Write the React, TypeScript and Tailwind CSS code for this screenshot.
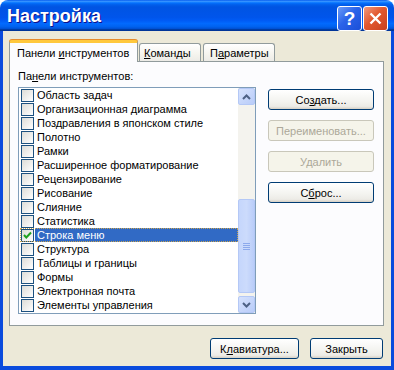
import React from 'react';

const items = [
  'Область задач',
  'Организационная диаграмма',
  'Поздравления в японском стиле',
  'Полотно',
  'Рамки',
  'Расширенное форматирование',
  'Рецензирование',
  'Рисование',
  'Слияние',
  'Статистика',
  'Строка меню',
  'Структура',
  'Таблицы и границы',
  'Формы',
  'Электронная почта',
  'Элементы управления',
];

const selected = 10;

const btn =
  'h-[21px] rounded-[3px] border border-[#003C74] bg-[linear-gradient(to_bottom,#FFFFFF,#F3F3EF_60%,#ECEBE6_86%,#D6D0C5)] text-[11px] leading-[14px] text-black flex items-center justify-center';
const btnOff =
  'h-[21px] rounded-[3px] border border-[#C9C7BA] bg-[#F5F4EA] text-[11px] leading-[14px] text-[#ACA899] flex items-center justify-center';

const Checkbox = ({ checked }: { checked?: boolean }) => (
  <div className="w-[13px] h-[13px] shrink-0 border border-[#1C5180] bg-[linear-gradient(135deg,#DCDCD7,#FFFFFF)] flex items-center justify-center">
    {checked && (
      <svg width="9" height="9" viewBox="0 0 9 9">
        <path d="M1 4 L3.3 6.5 L8 1.5" fill="none" stroke="#21A121" strokeWidth="2" />
      </svg>
    )}
  </div>
);

const Chevron = ({ up }: { up?: boolean }) => (
  <svg width="9" height="6" viewBox="0 0 9 6">
    <polyline
      points={up ? '1,5 4.5,1.5 8,5' : '1,1 4.5,4.5 8,1'}
      fill="none"
      stroke="#4D6185"
      strokeWidth="2"
    />
  </svg>
);

const ScrollButton = ({ up }: { up?: boolean }) => (
  <div className="h-[17px] rounded-[2px] border border-[#B4C8F6] bg-[linear-gradient(135deg,#D6E2FD,#B9CCF9)] flex items-center justify-center">
    <Chevron up={up} />
  </div>
);

export default function App() {
  return (
    <div className="w-[394px] h-[370px] bg-white font-['Tahoma','Liberation_Sans',Arial,sans-serif]">
      <div className="w-[394px] h-[370px] flex flex-col">
        {/* title bar */}
        <div className="h-[31px] shrink-0 rounded-t-[8px] bg-[linear-gradient(to_bottom,#0058EE_0%,#3A93FF_4%,#288EFF_6%,#127DFF_8%,#036FFC_10%,#0262EE_14%,#0057E5_20%,#0054E3_24%,#0055EB_56%,#005BF5_66%,#026AFE_76%,#0062EF_86%,#0052D6_92%,#0040AB_94%,#003092_100%)] flex items-center pl-[7px] pr-[6px]">
          <span className="flex-1 text-white font-bold text-[18px] leading-[22px] font-['Liberation_Sans',Arial,sans-serif] [text-shadow:1px_1px_#0F1089]">
            Настройка
          </span>
          <div className="flex gap-[1px] mt-[5px]">
            <div className="w-[25px] h-[25px] rounded-[3px] border border-white bg-[linear-gradient(135deg,#6B9CF8,#2A63E9_45%,#1B4FD8)] flex items-center justify-center text-white font-bold text-[19px] leading-none font-['Liberation_Sans',Arial,sans-serif]">
              ?
            </div>
            <div className="w-[25px] h-[25px] rounded-[3px] border border-white bg-[linear-gradient(135deg,#F09A7E,#E2582F_45%,#C8401E)] flex items-center justify-center">
              <svg width="13" height="13" viewBox="0 0 13 13">
                <path d="M1.5 1.5 L11.5 11.5 M11.5 1.5 L1.5 11.5" stroke="white" strokeWidth="2.4" />
              </svg>
            </div>
          </div>
        </div>

        {/* body */}
        <div className="flex-1 flex flex-col bg-[#ECE9D8] border-x-[3px] border-b-[4px] border-[#0A4BDD] pt-[9px] pl-[6px] pr-[7px]">
          {/* tabs */}
          <div className="h-[21px] flex items-end relative z-10">
            <div className="w-[129px] h-[22px] -mb-px rounded-t-[3px] border-x border-[#919B9C] border-t-[3px] border-t-[#FFC83C] shadow-[0_-1px_0_#E68B2C] bg-[#FCFCFE] text-[11px] leading-[14px] pt-[3px] pl-[7px] whitespace-nowrap">
              Панели <u>и</u>нструментов
            </div>
            <div className="w-[62px] h-[18px] ml-[1px] rounded-t-[3px] border border-b-0 border-[#919B9C] bg-[linear-gradient(to_bottom,#FFFFFF,#F5F4EE_60%,#ECEBE6)] text-[11px] leading-[14px] pl-[4px] pt-[2px]">
              <u>К</u>оманды
            </div>
            <div className="w-[72px] h-[18px] ml-[2px] rounded-t-[3px] border border-b-0 border-[#919B9C] bg-[linear-gradient(to_bottom,#FFFFFF,#F5F4EE_60%,#ECEBE6)] text-[11px] leading-[14px] pl-[6px] pt-[2px]">
              П<u>а</u>раметры
            </div>
          </div>

          {/* panel */}
          <div className="w-[375px] h-[265px] border border-[#919B9C] bg-[#FCFCFE] pt-[7px] pl-[8px] flex flex-col">
            <div className="text-[11px] leading-[14px] mb-[4px]">
              Па<u>н</u>ели инструментов:
            </div>
            <div className="flex">
              <div className="w-[238px] h-[227px] border border-[#7F9DB9] bg-white flex">
                <div className="flex-1 flex flex-col">
                  {items.map((label, i) => (
                    <div key={label} className="h-[14px] flex items-start pl-[2px] relative">
                      <div className="pt-[1px]">
                        <Checkbox checked={i === selected} />
                      </div>
                      <div
                        className={`flex-1 ml-[1px] pl-[2px] h-[14px] text-[11px] leading-[14px] whitespace-nowrap ${
                          i === selected ? 'bg-[#316AC5] text-white' : 'text-black'
                        }`}
                      >
                        {label}
                      </div>
                      {i === selected && (
                        <div className="absolute left-[1px] right-0 top-0 bottom-0 border border-dotted border-[#C9A450]" />
                      )}
                    </div>
                  ))}
                </div>
                <div className="w-[17px] flex flex-col bg-[#F4F3EE]">
                  <ScrollButton up />
                  <div className="flex-1" />
                  <div className="h-[94px] rounded-[2px] border border-[#B4C8F6] bg-[linear-gradient(to_right,#C5D6FC,#CCDBFC_50%,#BACDF9)] flex flex-col items-center justify-center gap-[1px]">
                    <div className="w-[7px] h-[1px] bg-[#8CA9EC]" />
                    <div className="w-[7px] h-[1px] bg-[#8CA9EC]" />
                    <div className="w-[7px] h-[1px] bg-[#8CA9EC]" />
                    <div className="w-[7px] h-[1px] bg-[#8CA9EC]" />
                  </div>
                  <div className="h-[3px]" />
                  <ScrollButton />
                </div>
              </div>

              <div className="ml-[12px] mt-[2px] flex flex-col gap-[10px]">
                <div className={`${btn} w-[106px] h-[20px]`}>
                  <span>
                    Со<u>з</u>дать...
                  </span>
                </div>
                <div className={`${btnOff} w-[106px] h-[20px]`}>Переименовать...</div>
                <div className={`${btnOff} w-[106px] h-[20px]`}>Удалить</div>
                <div className={`${btn} w-[106px] h-[20px]`}>
                  <span>
                    С<u>б</u>рос...
                  </span>
                </div>
              </div>
            </div>
          </div>

          {/* bottom buttons */}
          <div className="mt-[12px] flex justify-end gap-[11px] pr-[1px]">
            <div className={`${btn} w-[89px]`}>
              <span>
                К<u>л</u>авиатура...
              </span>
            </div>
            <div className={`${btn} w-[73px]`}>Закрыть</div>
          </div>
        </div>
      </div>
    </div>
  );
}
